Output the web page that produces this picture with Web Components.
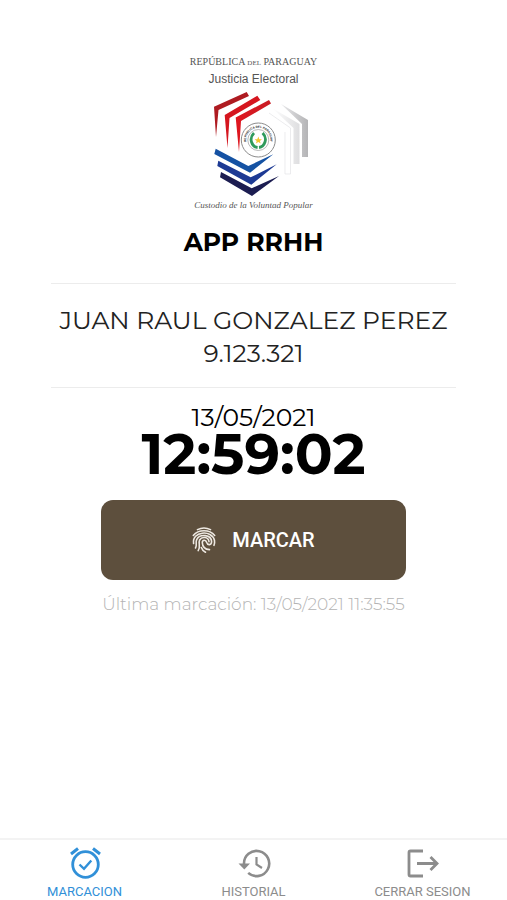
<!DOCTYPE html>
<html lang="es">
<head>
<meta charset="utf-8">
<meta name="viewport" content="width=device-width, initial-scale=1">
<title>APP RRHH</title>
<style>
  body {
    margin: 0;
    background: #fff;
    color: #000;
    font-family: Montserrat, Inter, "Open Sans", sans-serif;
  }
</style>
</head>
<body>
  <app-screen>
    <app-brand heading="APP RRHH"></app-brand>
    <employee-card name="JUAN RAUL GONZALEZ PEREZ" document="9.123.321"></employee-card>
    <clock-panel date="13/05/2021" time="12:59:02">Última marcación: 13/05/2021 11:35:55</clock-panel>
    <tab-bar slot="footer">
      <tab-item active>
        <svg slot="icon" viewBox="0 0 34 34" fill="none" stroke="currentColor">
          <circle cx="17.500" cy="18.500" r="12.800" stroke-width="2.800"/>
          <path d="M3 8 10 2.500M32 8 25 2.500" stroke-width="3"/>
          <path d="M11.500 18.500 16 22.800 23.300 14.500" stroke-width="2.400"/>
        </svg>
        MARCACION
      </tab-item>
      <tab-item>
        <svg slot="icon" viewBox="0 0 34 34" fill="none" stroke="currentColor">
          <path d="M7 18a12.600 12.600 0 1 1 4.200 8.900" stroke-width="2.600"/>
          <path d="M1.500 17.500H13L7.300 23.500Z" fill="currentColor" stroke="none"/>
          <path d="M19.500 11V18.500L25 22" stroke-width="2.200"/>
        </svg>
        HISTORIAL
      </tab-item>
      <tab-item>
        <svg slot="icon" viewBox="0 0 34 34" fill="none" stroke="currentColor">
          <path d="M17 5H4.500Q3 5 3 6.500V28.500Q3 30 4.500 30H17" stroke-width="2.800"/>
          <path d="M11 17.500H31M24.500 11 31 17.500 24.500 24" stroke-width="2.800"/>
        </svg>
        CERRAR SESION
      </tab-item>
    </tab-bar>
  </app-screen>

<script>
class AppScreen extends HTMLElement {
  constructor () {
    super()
    this.attachShadow({ mode: 'open' })
  }

  connectedCallback () {
    this.shadowRoot.innerHTML =
      /*html*/`
      <style>
        :host {
          display: flex;
          flex-direction: column;
          min-height: 100vh;
        }
        main {
          flex: 1;
          width: 80%;
          margin: 0 auto;
          padding-top: 54px;
        }
      </style>
      <main><slot></slot></main>
      <slot name="footer"></slot>
      `
  }
}

class AppBrand extends HTMLElement {
  constructor () {
    super()
    this.attachShadow({ mode: 'open' })
  }

  connectedCallback () {
    this.shadowRoot.innerHTML =
      /*html*/`
      <style>
        :host {
          display: block;
          text-align: center;
        }
        figure {
          display: flex;
          flex-direction: column;
          align-items: center;
          margin: 0;
          color: #555;
        }
        p, figcaption {
          margin: 0;
          line-height: 16px;
          white-space: nowrap;
        }
        .country {
          font-family: "Liberation Serif", serif;
          font-size: 10px;
        }
        .country small {
          font-size: 7px;
        }
        .office {
          font-family: "Liberation Sans", sans-serif;
          font-size: 12px;
        }
        figcaption {
          font-family: "Liberation Serif", serif;
          font-size: 9px;
          font-style: italic;
        }
        svg {
          width: 111px;
          height: 106px;
          margin-top: 4px;
        }
        h1 {
          margin: 14px 0 0;
          font-size: 25px;
          font-weight: 700;
          line-height: 30px;
        }
      </style>
      <figure>
        <p class="country">REPÚBLICA <small>DEL</small> PARAGUAY</p>
        <p class="office">Justicia Electoral</p>
        <svg viewBox="-15 0 111 106">
          <defs>
            <linearGradient id="red" x1="0" x2="1" y1="0" y2="0">
              <stop offset="0" stop-color="#e0161f"/>
              <stop offset="1" stop-color="#c81c24"/>
            </linearGradient>
            <linearGradient id="grey" x1="0" x2="1" y1="0" y2="0">
              <stop offset="0" stop-color="#e8e8ea"/>
              <stop offset="1" stop-color="#b4b4b6"/>
            </linearGradient>
            <linearGradient id="light" x1="0" x2="1" y1="0" y2="0">
              <stop offset="0" stop-color="#fff"/>
              <stop offset="1" stop-color="#dedee0"/>
            </linearGradient>
            <path id="ring" d="M35 55.500A12.200 12.200 0 1 1 55.600 55.500"/>
          </defs>
          <path fill="url(#grey)" d="M68 13 95 29V66H89V33Z"/>
          <path fill="url(#light)" d="M59 17 86.500 33V73H80.500V37Z"/>
          <path fill="#fff" stroke="#e4e4e6" stroke-width=".7" d="M56 22 77.500 37V83H72V41"/>
          <path fill="#ae1b21" d="M1 15.700 33.700 1 36 5 5.500 19 3 46Z"/>
          <path fill="#d5161f" d="M11.700 24 44.300 4.700 47.300 9 16.500 27 14.500 57Z"/>
          <path fill="url(#red)" d="M22.700 26.500 56 9 58 12.500 28 30 26 61Z"/>
          <path fill="#1552a3" d="M2.700 57.700 35.300 75 60.300 63.300 37 81.700 1.300 63Z"/>
          <path fill="#1d3a94" d="M5.300 69.700 37.700 86.300 63.700 73.300 38.300 93.700 4.300 75Z"/>
          <path fill="#1c1d51" d="M8 81 38.700 97.300 66 85 39 105 7 86.300Z"/>
          <circle cx="45.300" cy="49" r="17" fill="#fff" stroke="#8b8b8b"/>
          <circle cx="45.300" cy="49" r="10.500" fill="#fff" stroke="#9a9a9a" stroke-width=".7"/>
          <text font-family="Liberation Sans, sans-serif" font-size="3" font-weight="700" fill="#222"><textPath href="#ring" startOffset="50%" text-anchor="middle">REPUBLICA DEL PARAGUAY</textPath></text>
          <path fill="none" stroke="#2f9a5b" stroke-width="2.800" d="M41 42Q37 46 38.500 51T44.600 56.500M49.600 42Q53.600 46 52 51T46 56.500"/>
          <path fill="#f2c62e" d="M45.300 45.500 46.300 48.200H49L46.900 49.900 47.700 52.500 45.300 51 42.900 52.500 43.700 49.900 41.600 48.200H44.300Z"/>
        </svg>
        <figcaption>Custodio de la Voluntad Popular</figcaption>
      </figure>
      <h1>${this.getAttribute('heading')}</h1>
      `
  }
}

class EmployeeCard extends HTMLElement {
  constructor () {
    super()
    this.attachShadow({ mode: 'open' })
  }

  connectedCallback () {
    this.shadowRoot.innerHTML =
      /*html*/`
      <style>
        :host {
          display: block;
          margin-top: 26px;
          padding: 20px 0 17px;
          border-top: 1px solid #ececec;
          border-bottom: 1px solid #ececec;
          color: #222;
          text-align: center;
        }
        p {
          margin: 0;
          font-size: 25px;
          line-height: 33px;
        }
      </style>
      <p>${this.getAttribute('name')}</p>
      <p>${this.getAttribute('document')}</p>
      `
  }
}

class ClockPanel extends HTMLElement {
  constructor () {
    super()
    this.attachShadow({ mode: 'open' })
  }

  connectedCallback () {
    this.shadowRoot.innerHTML =
      /*html*/`
      <style>
        :host {
          display: flex;
          flex-direction: column;
          align-items: center;
          padding-top: 14px;
        }
        time {
          font-size: 25px;
          line-height: 30px;
        }
        .hour {
          font-size: 56px;
          font-weight: 700;
          line-height: 44px;
        }
        button {
          display: flex;
          align-items: center;
          justify-content: center;
          gap: 16px;
          width: 75%;
          height: 80px;
          margin-top: 24px;
          padding: 0;
          border: 0;
          border-radius: 12px;
          background: #5d4f3d;
          color: #fff;
          font-family: Roboto, sans-serif;
          font-size: 20px;
          font-weight: 500;
        }
        button svg {
          width: 24px;
          height: 26px;
        }
        .last {
          margin: 12px 0 0;
          color: #b4b4b4;
          font-size: 17px;
          font-weight: 300;
          line-height: 24px;
          white-space: nowrap;
        }
      </style>
      <time>${this.getAttribute('date')}</time>
      <time class="hour">${this.getAttribute('time')}</time>
      <button type="button">
        <svg viewBox="0 0 24 26" fill="none" stroke="#eee9e2" stroke-width="1.600" stroke-linecap="round">
          <path d="M5.500 2.600Q12-.6 18.500 2.600"/>
          <path d="M1.300 8.500C6.500 2.200 17.500 2.200 22.700 8.500"/>
          <path d="M1.600 16.500C-.5 4.300 20 2.200 22.500 13.500Q22.900 16 22 18.300"/>
          <path d="M3.500 21C5.500 17.800 3 15.500 4.800 12.300 8 6.500 19.300 7.500 19.600 14.600 19.600 18.500 15.600 18.600 14.600 15.300 13.800 12.300 10.300 12.600 10.300 15.600 10.500 19.800 13.500 22.400 17.500 22.600"/>
          <path d="M6.200 23.600C9 19.500 6 16.300 7.600 13 9.800 9.200 16.300 9.800 17 14.600"/>
          <path d="M13.500 25.200Q10.300 23.500 9.300 20.500"/>
        </svg>
        MARCAR
      </button>
      <p class="last"><slot></slot></p>
      `
  }
}

class TabBar extends HTMLElement {
  constructor () {
    super()
    this.attachShadow({ mode: 'open' })
  }

  connectedCallback () {
    this.shadowRoot.innerHTML =
      /*html*/`
      <style>
        :host {
          display: block;
          border-top: 2px solid #f3f3f3;
        }
        nav {
          display: grid;
          grid-template-columns: repeat(3, 1fr);
        }
      </style>
      <nav><slot></slot></nav>
      `
  }
}

class TabItem extends HTMLElement {
  constructor () {
    super()
    this.attachShadow({ mode: 'open' })
  }

  connectedCallback () {
    this.shadowRoot.innerHTML =
      /*html*/`
      <style>
        :host {
          display: block;
          color: #8c8c8c;
        }
        :host([active]) {
          color: #3190d8;
        }
        a {
          display: flex;
          flex-direction: column;
          align-items: center;
          gap: 4px;
          padding: 6px 0 0;
          color: inherit;
          font-family: Roboto, sans-serif;
          font-size: 13px;
          line-height: 16px;
          text-decoration: none;
        }
        ::slotted(svg) {
          display: block;
          width: 34px;
          height: 34px;
        }
      </style>
      <a href="#">
        <slot name="icon"></slot>
        <span><slot></slot></span>
      </a>
      `
  }
}

customElements.define('app-screen', AppScreen)
customElements.define('app-brand', AppBrand)
customElements.define('employee-card', EmployeeCard)
customElements.define('clock-panel', ClockPanel)
customElements.define('tab-bar', TabBar)
customElements.define('tab-item', TabItem)
</script>
</body>
</html>
